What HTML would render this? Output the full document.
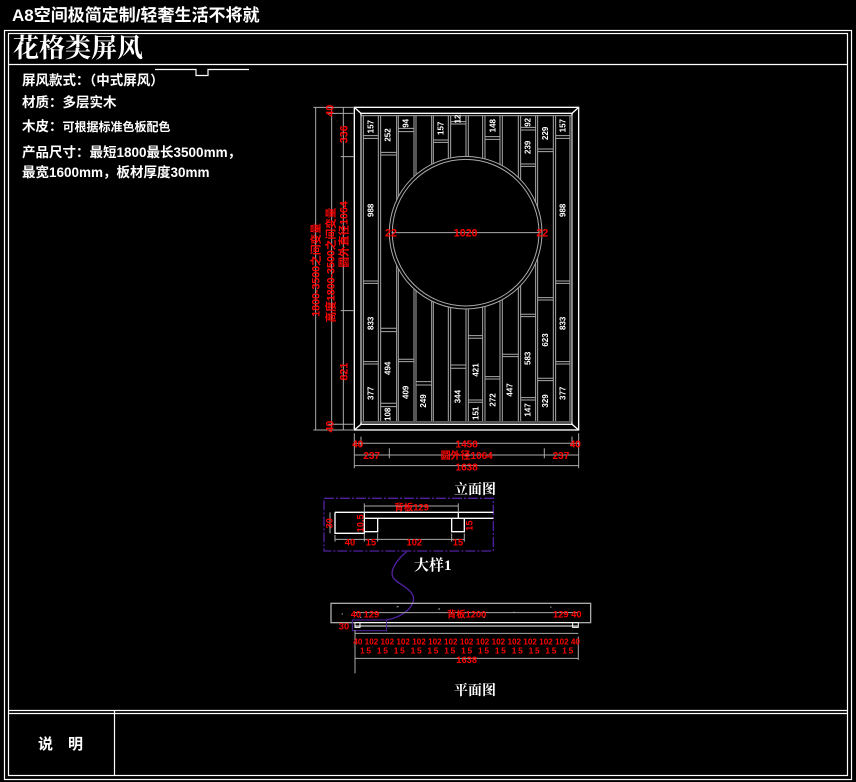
<!DOCTYPE html>
<html><head><meta charset="utf-8"><style>
html,body{margin:0;padding:0;background:#000;width:856px;height:782px;overflow:hidden}
svg{display:block}
text{font-family:"Liberation Sans","Noto Sans CJK SC",sans-serif}
.s{font-family:"Liberation Serif","Noto Serif CJK SC","Noto Sans CJK SC",serif}
</style></head><body>
<svg width="856" height="782" viewBox="0 0 856 782" xmlns="http://www.w3.org/2000/svg">
<rect width="856" height="782" fill="#000"/>
<text x="12" y="21" fill="#fff" font-size="17" font-weight="bold">A8空间极简定制/轻奢生活不将就</text>
<g fill="none" stroke="#fff" stroke-width="1.2">
<rect x="4.5" y="30.5" width="847" height="749"/>
<rect x="8.5" y="33.5" width="839" height="742"/>
<line x1="8" y1="64.5" x2="848" y2="64.5"/>
<line x1="8" y1="710.5" x2="848" y2="710.5"/>
<line x1="8" y1="713.5" x2="848" y2="713.5"/>
<line x1="114.5" y1="711" x2="114.5" y2="776"/>
<polyline points="155,69.5 196,69.5 196,75.5 208,75.5 208,69.5 249,69.5"/>
</g>
<text x="13" y="57" fill="#fff" font-size="26" font-weight="bold" class="s">花格类屏风</text>
<g fill="#fff" class="s" font-size="13.5" font-weight="bold">
<text x="22" y="85">屏风款式：（中式屏风）</text>
<text x="22" y="107">材质：多层实木</text>
<text x="22" y="131">木皮：<tspan font-size="12">可根据标准色板配色</tspan></text>
<text x="22" y="157">产品尺寸：最短1800最长3500mm，</text>
<text x="22" y="177">最宽1600mm，板材厚度30mm</text>
</g>
<text x="38" y="749" fill="#fff" font-size="15" font-weight="bold">说　明</text>

<g transform="translate(300,95) scale(0.3333)">
<g stroke="#aaa" stroke-width="3" fill="none">
<line x1="190" y1="62" x2="190" y2="978"/><line x1="235" y1="62" x2="235" y2="978"/>
<line x1="242" y1="62" x2="242" y2="978"/><line x1="290" y1="62" x2="290" y2="978"/>
<line x1="295" y1="62" x2="295" y2="978"/><line x1="342" y1="62" x2="342" y2="978"/>
<line x1="348" y1="62" x2="348" y2="978"/><line x1="395" y1="62" x2="395" y2="978"/>
<line x1="400" y1="62" x2="400" y2="978"/><line x1="445" y1="62" x2="445" y2="978"/>
<line x1="452" y1="62" x2="452" y2="978"/><line x1="498" y1="62" x2="498" y2="978"/>
<line x1="505" y1="62" x2="505" y2="978"/><line x1="548" y1="62" x2="548" y2="978"/>
<line x1="555" y1="62" x2="555" y2="978"/><line x1="600" y1="62" x2="600" y2="978"/>
<line x1="607" y1="62" x2="607" y2="978"/><line x1="655" y1="62" x2="655" y2="978"/>
<line x1="662" y1="62" x2="662" y2="978"/><line x1="707" y1="62" x2="707" y2="978"/>
<line x1="713" y1="62" x2="713" y2="978"/><line x1="760" y1="62" x2="760" y2="978"/>
<line x1="767" y1="62" x2="767" y2="978"/><line x1="810" y1="62" x2="810" y2="978"/>
<path d="M190 122H235M190 130H235M190 558H235M190 565H235M190 800H235M190 807H235
M242 172H290M242 180H290M242 700H290M242 710H290M242 925H290M242 935H290
M295 100H342M295 110H342M295 793H342M295 800H342
M348 860H395M348 870H395
M400 135H445M400 142H445
M452 80H498M452 87H498M452 810H498M452 820H498
M505 722H548M505 730H548M505 915H548M505 922H548
M555 125H600M555 133H600M555 845H600M555 852H600
M607 778H655M607 785H655
M662 97H707M662 105H707M662 207H707M662 214H707M662 658H707M662 665H707M662 908H707M662 915H707
M713 162H760M713 170H760M713 608H760M713 615H760M713 850H760M713 857H760
M767 122H810M767 130H810M767 558H810M767 565H810M767 800H810M767 807H810"/>
</g>
<circle cx="497" cy="413" r="230" fill="#000"/>
<circle cx="497" cy="413" r="229" fill="none" stroke="#aaa" stroke-width="3"/>
<circle cx="497" cy="413" r="220" fill="none" stroke="#aaa" stroke-width="3"/>
<g stroke="#fff" stroke-width="4" fill="none">
<rect x="163" y="37" width="673" height="968"/>
<rect x="183" y="55" width="633" height="933"/>
<path d="M163 37L183 55M836 37L816 55M163 1005L183 988M836 1005L816 988"/>
</g>
<rect x="183" y="62" width="633" height="919" fill="none" stroke="#aaa" stroke-width="3"/>
<line x1="275" y1="413" x2="720" y2="413" stroke="#aaa" stroke-width="3"/>
<g fill="#f00" font-size="32" font-weight="bold" text-anchor="middle">
<text x="273" y="425">22</text><text x="497" y="425">1020</text><text x="727" y="425">22</text>
</g>
<g fill="#fff" font-size="24" font-weight="bold" text-anchor="middle">
<text transform="translate(220,95) rotate(-90)">157</text>
<text transform="translate(272,120) rotate(-90)">252</text>
<text transform="translate(325,85) rotate(-90)">94</text>
<text transform="translate(430,100) rotate(-90)">157</text>
<text transform="translate(482,72) rotate(-90)">12</text>
<text transform="translate(586,92) rotate(-90)">148</text>
<text transform="translate(692,82) rotate(-90)">92</text>
<text transform="translate(692,157) rotate(-90)">239</text>
<text transform="translate(744,115) rotate(-90)">229</text>
<text transform="translate(797,92) rotate(-90)">157</text>
<text transform="translate(220,346) rotate(-90)">988</text>
<text transform="translate(797,346) rotate(-90)">988</text>
<text transform="translate(220,685) rotate(-90)">833</text>
<text transform="translate(797,685) rotate(-90)">833</text>
<text transform="translate(744,735) rotate(-90)">623</text>
<text transform="translate(692,790) rotate(-90)">583</text>
<text transform="translate(272,820) rotate(-90)">494</text>
<text transform="translate(325,892) rotate(-90)">409</text>
<text transform="translate(378,918) rotate(-90)">249</text>
<text transform="translate(482,905) rotate(-90)">344</text>
<text transform="translate(535,825) rotate(-90)">421</text>
<text transform="translate(535,955) rotate(-90)">151</text>
<text transform="translate(586,915) rotate(-90)">272</text>
<text transform="translate(638,885) rotate(-90)">447</text>
<text transform="translate(692,945) rotate(-90)">147</text>
<text transform="translate(744,918) rotate(-90)">329</text>
<text transform="translate(220,895) rotate(-90)">377</text>
<text transform="translate(797,895) rotate(-90)">377</text>
<text transform="translate(272,958) rotate(-90)">108</text>
</g>
<g stroke="#aaa" stroke-width="3" fill="none">
<line x1="47" y1="37" x2="47" y2="1005"/>
<line x1="95" y1="37" x2="95" y2="1005"/>
<line x1="130" y1="37" x2="130" y2="1005"/>
<path d="M40 37H160M40 1005H160M85 55H160M85 988H160M122 185H160M122 647H160"/>
</g>
<g fill="#f00" font-size="32" font-weight="bold" text-anchor="middle">
<text transform="translate(100,47) rotate(-90)">40</text>
<text transform="translate(100,995) rotate(-90)">40</text>
<text transform="translate(142,118) rotate(-90)">336</text>
<text transform="translate(142,830) rotate(-90)">821</text>
<text transform="translate(142,418) rotate(-90)">圆外直径1064</text>
<text transform="translate(104,510) rotate(-90)">高度1800-3500之间变量</text>
<text transform="translate(59,525) rotate(-90)">1800-3500之间变量</text>
</g>
<g stroke="#aaa" stroke-width="3" fill="none">
<line x1="163" y1="1045" x2="836" y2="1045"/>
<line x1="163" y1="1080" x2="836" y2="1080"/>
<line x1="163" y1="1112" x2="836" y2="1112"/>
<path d="M163 1015V1120M836 1015V1120M183 1025V1055M816 1025V1055M268 1060V1090M733 1060V1090"/>
</g>
<g fill="#f00" font-size="30" font-weight="bold" text-anchor="middle">
<text x="173" y="1058">40</text><text x="500" y="1058">1458</text><text x="826" y="1058">40</text>
<text x="215" y="1092">237</text><text x="500" y="1092">圆外径1064</text><text x="783" y="1092">237</text>
<text x="500" y="1126">1638</text>
</g>
</g>
<text x="454" y="494" fill="#fff" font-size="14" font-weight="bold" class="s">立面图</text>
<text x="414" y="570" fill="#fff" font-size="15" font-weight="bold" class="s">大样1</text>
<text x="454" y="695" fill="#fff" font-size="14" font-weight="bold" class="s">平面图</text>

<g transform="translate(310,480) scale(0.3333)">
<rect x="42" y="55" width="508" height="158" fill="none" stroke="#5020a0" stroke-width="4" stroke-dasharray="30 6 6 6"/>
<path d="M290 215C260 240 240 270 248 290S300 320 310 350C315 380 280 410 230 420" fill="none" stroke="#5020a0" stroke-width="4"/>
<g stroke="#fff" stroke-width="4" fill="none">
<path d="M75 97H550M163 115H550M75 97V160H163V97M163 115V155H203V115M425 115V155H463V115M445 97V115"/>
</g>
<g stroke="#aaa" stroke-width="3" fill="none">
<path d="M75 178H463M163 78H445M163 70V97M445 70V97M60 97V160M75 165V185M163 160V185M203 160V185M425 160V185M463 160V185"/>
</g>
<g fill="#f00" font-size="28" font-weight="bold" text-anchor="middle">
<text x="305" y="92">背板129</text><text x="120" y="196">40</text><text x="183" y="196">15</text>
<text x="313" y="196">102</text><text x="444" y="196">15</text>
<text transform="translate(68,130) rotate(-90)">30</text>
<text transform="translate(160,130) rotate(-90)">10.5</text>
<text transform="translate(488,137) rotate(-90)">15</text>
</g>
<rect x="63" y="370" width="779" height="58" fill="none" stroke="#aaa" stroke-width="4"/>
<g fill="#888"><rect x="95" y="400" width="4" height="4"/><rect x="260" y="378" width="6" height="4"/><rect x="385" y="385" width="5" height="4"/><rect x="610" y="395" width="4" height="4"/><rect x="720" y="380" width="5" height="3"/><rect x="150" y="410" width="4" height="4"/><rect x="520" y="410" width="5" height="4"/></g>
<g stroke="#fff" stroke-width="3" fill="none">
<path d="M135 428V442H150V428M135 438H805M788 428V442H805V428M135 428H805"/>
</g>
<rect x="127" y="420" width="103" height="32" fill="none" stroke="#5020a0" stroke-width="3"/>
<g stroke="#aaa" stroke-width="3" fill="none">
<path d="M135 535H805M135 450V580M805 470V540M135 398H805M135 460H805"/>
</g>
<g fill="#f00" font-size="28" font-weight="bold" text-anchor="middle">
<text x="165" y="412">40 129</text><text x="470" y="412">背板1200</text><text x="772" y="412">129 40</text>
<text x="102" y="448">30</text>
<text x="470" y="494" font-size="25" textLength="680" lengthAdjust="spacingAndGlyphs">40 102 102 102 102 102 102 102 102 102 102 102 102 102 40</text>
<text x="470" y="520" font-size="25" textLength="640" lengthAdjust="spacing">15 15 15 15 15 15 15 15 15 15 15 15 15</text>
<text x="470" y="549">1638</text>
</g>
</g>
</svg>
</body></html>
